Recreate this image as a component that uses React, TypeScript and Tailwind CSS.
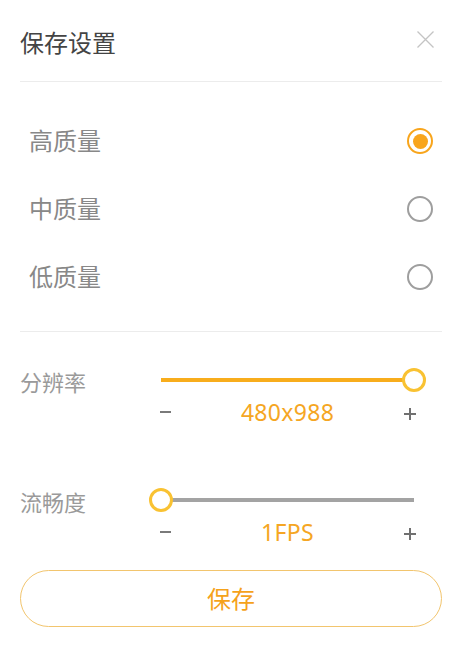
import { useState } from "react";

const QUALITIES = ["高质量", "中质量", "低质量"];

function Radio({ checked }: { checked: boolean }) {
  return checked ? (
    <span className="flex h-[26px] w-[26px] items-center justify-center rounded-full border-[2.5px] border-[#f8a51c]">
      <span className="h-[15px] w-[15px] rounded-full bg-[#f8a51c]" />
    </span>
  ) : (
    <span className="h-[26px] w-[26px] rounded-full border-2 border-[#9e9e9e]" />
  );
}

function Slider({ label, value, percent }: { label: string; value: string; percent: number }) {
  return (
    <div className="flex">
      <div className="w-[129px] pt-[2px] text-[22px] leading-[24px] text-[#9a9a9a]">{label}</div>
      <div className="w-[277px]">
        <div className="relative mx-[12px] h-[24px]">
          <div className="absolute left-0 right-0 top-[10px] h-[4px] bg-[#a3a3a3]" />
          <div
            className="absolute left-0 top-[10px] h-[4px] bg-[#f8ad1c]"
            style={{ width: `${percent}%` }}
          />
          <div
            className="absolute top-0 h-[24px] w-[24px] -translate-x-1/2 rounded-full border-[3.5px] border-[#f9c232] bg-white"
            style={{ left: `${percent}%` }}
          />
        </div>
        <div className="mt-[8px] flex h-[24px] items-center justify-between pl-[11px] pr-[10px]">
          <span className="h-[2px] w-[11px] bg-[#7a7a7a]" />
          <span className="text-[23px] leading-[24px] tracking-[0.3px] text-[#f5a623]">{value}</span>
          <span className="relative mt-[3px] h-[12px] w-[12px]">
            <span className="absolute left-0 top-[5px] h-[2px] w-[12px] bg-[#707070]" />
            <span className="absolute left-[5px] top-0 h-[12px] w-[2px] bg-[#707070]" />
          </span>
        </div>
      </div>
    </div>
  );
}

export default function App() {
  const [quality, setQuality] = useState(0);

  return (
    <div
      className="h-[652px] w-[467px] bg-white pl-5 pr-[25px]"
      style={{ fontFamily: '"Noto Sans", "Noto Sans CJK SC", sans-serif' }}
    >
      <div className="flex h-[82px] items-start justify-between border-b border-[#ececec]">
        <h1 className="mt-[27px] text-[24px] leading-[32px] font-normal text-[#444]">保存设置</h1>
        <button className="mr-[8px] mt-[31px] text-[#c4c4c4]">
          <svg width="17" height="17" viewBox="0 0 17 17" fill="none" stroke="currentColor" strokeWidth="1.3">
            <path d="M0.5 0.5 L16.5 16.5 M16.5 0.5 L0.5 16.5" />
          </svg>
        </button>
      </div>

      <div className="border-b border-[#ececec] pt-[25px] pb-[20px]">
        {QUALITIES.map((q, i) => (
          <div
            key={q}
            className="flex h-[68px] cursor-pointer items-center justify-between px-[9px]"
            onClick={() => setQuality(i)}
          >
            <span className="text-[24px] leading-[32px] text-[#888]">{q}</span>
            <Radio checked={quality === i} />
          </div>
        ))}
      </div>

      <div className="pt-[36px]">
        <Slider label="分辨率" value="480x988" percent={100} />
        <div className="h-[64px]" />
        <Slider label="流畅度" value="1FPS" percent={0} />
      </div>

      <button className="mt-[26px] flex h-[57px] w-full items-center justify-center rounded-full border border-[#f2c56e] text-[24px] text-[#f5a21b]">
        保存
      </button>
    </div>
  );
}
